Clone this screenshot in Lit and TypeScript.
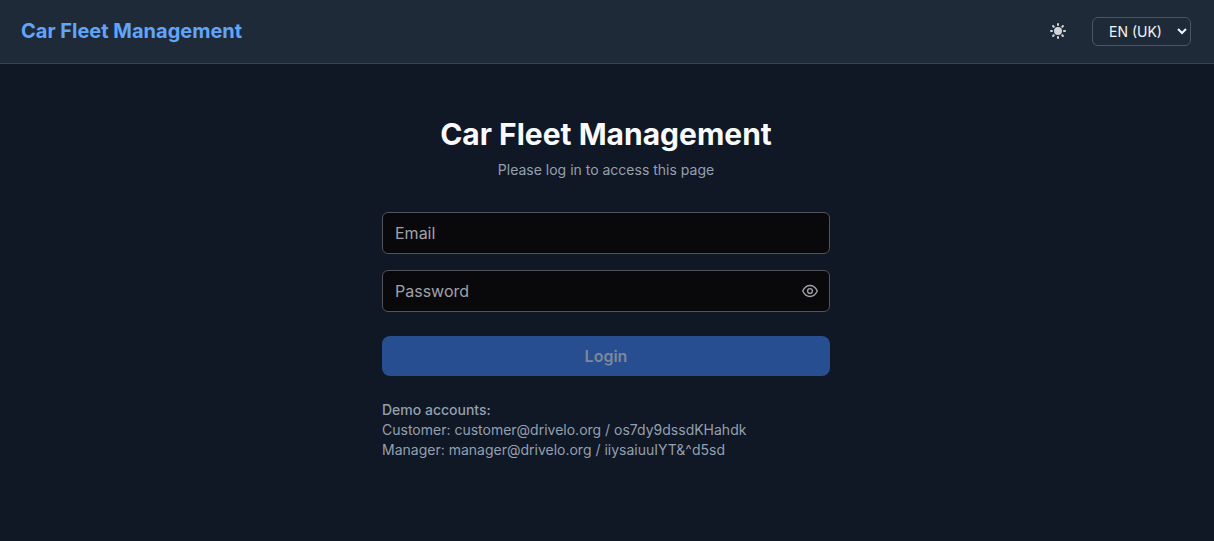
import { LitElement, html, css, svg } from "lit";
import { customElement, state } from "lit/decorators.js";

const sunIcon = svg`<path fill-rule="evenodd" clip-rule="evenodd" d="M10 2a1 1 0 011 1v1a1 1 0 11-2 0V3a1 1 0 011-1zm4 8a4 4 0 11-8 0 4 4 0 018 0zm-.464 4.95l.707.707a1 1 0 001.414-1.414l-.707-.707a1 1 0 00-1.414 1.414zm2.12-10.607a1 1 0 010 1.414l-.706.707a1 1 0 11-1.414-1.414l.707-.707a1 1 0 011.414 0zM17 11a1 1 0 100-2h-1a1 1 0 100 2h1zm-7 4a1 1 0 011 1v1a1 1 0 11-2 0v-1a1 1 0 011-1zM5.05 6.464A1 1 0 106.465 5.05l-.708-.707a1 1 0 00-1.414 1.414l.707.707zm1.414 8.486l-.707.707a1 1 0 01-1.414-1.414l.707-.707a1 1 0 011.414 1.414zM4 11a1 1 0 100-2H3a1 1 0 000 2h1z"/>`;

@customElement("app-header")
export class AppHeader extends LitElement {
  static styles = css`
    :host { display: block; }
    * { box-sizing: border-box; }
    .bar {
      display: flex;
      align-items: center;
      justify-content: space-between;
      min-height: 64px;
      padding: 0 23px 1px 21px;
      background: #1f2a39;
      border-bottom: 1px solid #374151;
    }
    .brand {
      color: #60a5fa;
      font-size: 20px;
      line-height: 28px;
      font-weight: 700;
      text-decoration: none;
    }
    .tools { display: flex; align-items: center; gap: 16px; }
    .theme {
      display: flex;
      padding: 8px;
      border: 0;
      border-radius: 6px;
      background: none;
      color: #d1d5db;
      cursor: pointer;
    }
    .theme svg { width: 20px; height: 20px; fill: currentColor; }
    .language {
      height: 29px;
      width: 99px;
      padding: 0 0 0 12px;
      border: 1px solid #4b5563;
      border-radius: 6px;
      background: #1f2a39;
      color: #f3f4f6;
      font: inherit;
      font-size: 14px;
    }
  `;

  render() {
    return html`
      <header class="bar">
        <a class="brand" href="#">Car Fleet Management</a>
        <div class="tools">
          <button class="theme" type="button" aria-label="Toggle theme">
            <svg viewBox="0 0 20 20" aria-hidden="true">${sunIcon}</svg>
          </button>
          <select class="language" aria-label="Language">
            <option>EN (UK)</option>
          </select>
        </div>
      </header>
    `;
  }
}

@customElement("login-form")
export class LoginForm extends LitElement {
  static styles = css`
    :host { display: block; width: 100%; max-width: 448px; }
    * { box-sizing: border-box; }
    .title {
      margin: 0;
      color: #f9fafb;
      font-size: 30px;
      line-height: 36px;
      font-weight: 700;
      text-align: center;
    }
    .hint {
      margin: 8px 0 0;
      color: #94a0af;
      font-size: 14px;
      line-height: 20px;
      text-align: center;
    }
    .form { display: flex; flex-direction: column; gap: 24px; margin-top: 32px; }
    .fields { display: flex; flex-direction: column; gap: 16px; }
    .field { position: relative; display: flex; }
    .input {
      width: 100%;
      height: 42px;
      padding: 0 12px;
      border: 1px solid #52525b;
      border-radius: 6px;
      background: #09090b;
      color: #ffffff;
      font: inherit;
      font-size: 16px;
    }
    .input::placeholder { color: #a1a1aa; opacity: 1; }
    .secret { padding-right: 40px; }
    .reveal {
      position: absolute;
      top: 0;
      bottom: 0;
      right: 12px;
      display: flex;
      align-items: center;
      padding: 0;
      border: 0;
      background: none;
      color: #a1a1aa;
      cursor: pointer;
    }
    .reveal svg { width: 16px; height: 16px; }
    .submit {
      height: 40px;
      border: 0;
      border-radius: 8px;
      background: #264e91;
      color: #7c8799;
      font: inherit;
      font-size: 16px;
      font-weight: 600;
    }
    .demo {
      margin-top: 24px;
      color: #94a0af;
      font-size: 14px;
      line-height: 20px;
    }
    .demo p { margin: 0; }
    .demo .label { font-weight: 500; }
  `;

  @state() private revealed = false;

  render() {
    return html`
      <h1 class="title">Car Fleet Management</h1>
      <p class="hint">Please log in to access this page</p>
      <form class="form">
        <div class="fields">
          <div class="field">
            <input class="input" type="email" placeholder="Email" aria-label="Email" />
          </div>
          <div class="field">
            <input
              class="input secret"
              type=${this.revealed ? "text" : "password"}
              placeholder="Password"
              aria-label="Password"
            />
            <button
              class="reveal"
              type="button"
              aria-label="Show password"
              @click=${() => (this.revealed = !this.revealed)}
            >
              <svg viewBox="0 0 14 14" fill="none" stroke="currentColor" stroke-width="1.2" aria-hidden="true">
                <path stroke-linejoin="round" d="M.6 7C1.3 5.6 3.3 2.2 7 2.2S12.7 5.6 13.4 7C12.7 8.4 10.7 11.8 7 11.8S1.3 8.4 .6 7Z" />
                <circle cx="7" cy="7" r="2.1" />
              </svg>
            </button>
          </div>
        </div>
        <button class="submit" type="submit" disabled>Login</button>
      </form>
      <div class="demo">
        <p class="label">Demo accounts:</p>
        <p>Customer: customer@drivelo.org / os7dy9dssdKHahdk</p>
        <p>Manager: manager@drivelo.org / iiysaiuuIYT&amp;^d5sd</p>
      </div>
    `;
  }
}

@customElement("app-root")
export class AppRoot extends LitElement {
  static styles = css`
    :host {
      display: flex;
      flex-direction: column;
      min-height: 100vh;
      background: #101725;
      font-family: Inter, "Liberation Sans", sans-serif;
      color-scheme: dark;
    }
    .main {
      flex: 1;
      display: flex;
      justify-content: center;
      padding: 52px 18px 48px 16px;
    }
  `;

  render() {
    return html`
      <app-header></app-header>
      <main class="main"><login-form></login-form></main>
    `;
  }
}
